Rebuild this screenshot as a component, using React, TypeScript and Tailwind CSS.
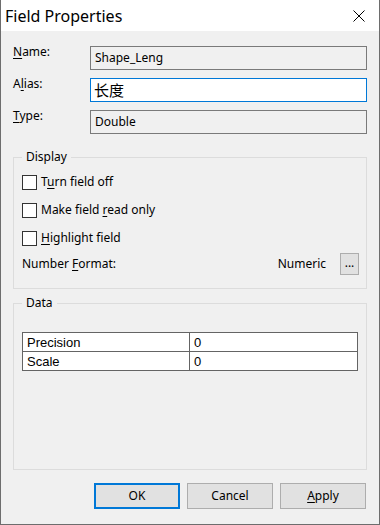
import React from "react";

const F = "font-['Noto_Sans','Noto_Sans_CJK_SC',sans-serif]";

function Check({ children }: { children: React.ReactNode }) {
  return (
    <div className="flex items-center h-[16px]">
      <div className="w-[15px] h-[15px] border border-[#333333] bg-white shrink-0" />
      <span className="ml-[4px] text-[12px] leading-[16px]">{children}</span>
    </div>
  );
}

function U({ children }: { children: React.ReactNode }) {
  return <span className="underline decoration-1 underline-offset-[2px]">{children}</span>;
}

export default function App() {
  return (
    <div className={`${F} w-[380px] h-[525px] flex flex-col bg-[#f0f0f0] border-x border-b border-[#6d6d6d] text-black`}>
      <div className="h-[31px] bg-white flex items-center justify-between shrink-0">
        <span className="pl-[4px] text-[16px] leading-[20px]">Field Properties</span>
        <svg width="12" height="12" viewBox="0 0 12 12" className="mr-[14px]">
          <path d="M0.5 0.5L11.5 11.5M11.5 0.5L0.5 11.5" stroke="#000" strokeWidth="1" fill="none" />
        </svg>
      </div>
      <div className="flex-1 flex flex-col px-[12px] min-h-0">
        <div className="flex flex-col gap-[8px] pt-[15px] text-[12px]">
          <div className="flex items-start">
            <span className="w-[77px] leading-[16px] -mt-[2px]"><U>N</U>ame:</span>
            <div className="flex-1 h-[24px] border border-[#7a7a7a] bg-[#f0f0f0] flex items-center pl-[4px] leading-[16px]">Shape_Leng</div>
          </div>
          <div className="flex items-start">
            <span className="w-[77px] leading-[16px] -mt-[2px]">A<U>l</U>ias:</span>
            <div className="flex-1 h-[24px] border border-[#0078d7] bg-white flex items-center pl-[3px] text-[15px] leading-[18px] font-['Noto_Sans_CJK_SC',sans-serif]">长度</div>
          </div>
          <div className="flex items-start">
            <span className="w-[77px] leading-[16px] -mt-[2px]"><U>T</U>ype:</span>
            <div className="flex-1 h-[24px] border border-[#7a7a7a] bg-[#f0f0f0] flex items-center pl-[4px] leading-[16px]">Double</div>
          </div>
        </div>

        <fieldset className="mt-[15px] border border-[#dcdcdc] pl-[8px] pr-[7px] pb-[13px]">
          <legend className="px-[4px] text-[12px] leading-[16px]">Display</legend>
          <div className="flex flex-col gap-[12px] pt-[9px]">
            <Check>T<U>u</U>rn field off</Check>
            <Check>Make field <U>r</U>ead only</Check>
            <Check><U>H</U>ighlight field</Check>
          </div>
          <div className="flex items-center h-[22px] mt-[7px] text-[12px]">
            <span className="flex-1">Number <U>F</U>ormat:</span>
            <span>Numeric</span>
            <div className="ml-[14px] w-[19px] h-[22px] border border-[#adadad] bg-[#e1e1e1] flex items-center justify-center leading-[12px] pb-[2px]">...</div>
          </div>
        </fieldset>

        <fieldset className="mt-[6px] flex-1 min-h-0 border border-[#dcdcdc] pl-[8px] pr-[8px]">
          <legend className="px-[4px] text-[12px] leading-[16px]">Data</legend>
          <table className="mt-[21px] w-full border-collapse font-['Liberation_Sans',sans-serif] text-[13px] bg-white">
            <tbody>
              <tr className="h-[19px]">
                <td className="w-[167px] border border-[#646464] pl-[4px] py-0 leading-[15px]">Precision</td>
                <td className="border border-[#646464] pl-[4px] py-0 leading-[15px]">0</td>
              </tr>
              <tr className="h-[19px]">
                <td className="border border-[#646464] pl-[4px] py-0 leading-[15px]">Scale</td>
                <td className="border border-[#646464] pl-[4px] py-0 leading-[15px]">0</td>
              </tr>
            </tbody>
          </table>
        </fieldset>

        <div className="flex justify-end gap-[7px] mt-[13px] mb-[15px] pr-[1px] text-[12px]">
          <div className="w-[86px] h-[26px] border-2 border-[#0078d7] bg-[#e1e1e1] flex items-center justify-center">OK</div>
          <div className="w-[86px] h-[26px] border border-[#adadad] bg-[#e1e1e1] flex items-center justify-center">Cancel</div>
          <div className="w-[86px] h-[26px] border border-[#adadad] bg-[#e1e1e1] flex items-center justify-center"><span><U>A</U>pply</span></div>
        </div>
      </div>
    </div>
  );
}
